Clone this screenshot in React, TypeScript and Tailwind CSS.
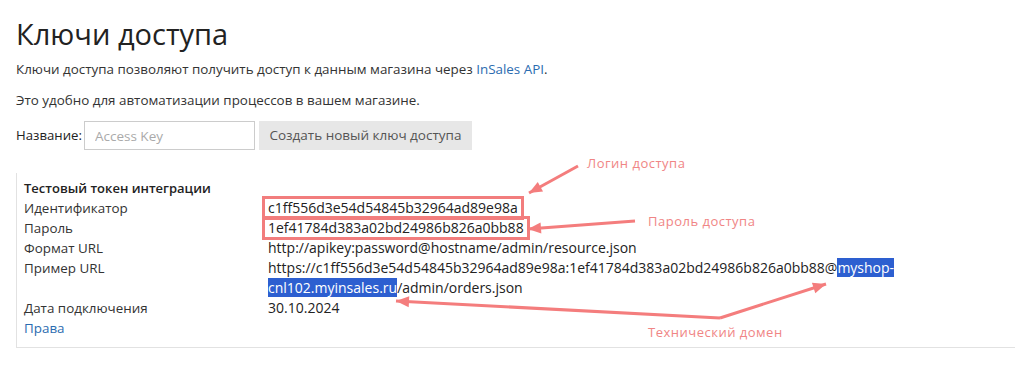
import React from 'react';

const font = { fontFamily: '"Open Sans", "Liberation Sans", sans-serif' };

const ARROW = '#f47d7d';

// arrowhead triangle at (x2,y2) pointing from (x1,y1)
function head(x1: number, y1: number, x2: number, y2: number, len = 13, half = 5.5) {
  const dx = x2 - x1;
  const dy = y2 - y1;
  const l = Math.hypot(dx, dy);
  const ux = dx / l;
  const uy = dy / l;
  const bx = x2 - ux * len;
  const by = y2 - uy * len;
  const px = -uy * half;
  const py = ux * half;
  return `${x2},${y2} ${bx + px},${by + py} ${bx - px},${by - py}`;
}

const arrows = [
  { x1: 578, y1: 166, x2: 529, y2: 193 },
  { x1: 635, y1: 221, x2: 528, y2: 229 },
  { x1: 720, y1: 318, x2: 826, y2: 284 },
  { x1: 720, y1: 318, x2: 396, y2: 301 },
];

const Marked: React.FC<{ children: React.ReactNode }> = ({ children }) => (
  <span className="inline-block -ml-[6px] -my-[2px] h-[24px] border-[3px] border-[#f27d7d] px-[3px] leading-[18px]">
    {children}
  </span>
);

export default function App() {
  return (
    <div className="relative h-[388px] w-full overflow-hidden bg-white text-[13.4px] text-[#333]" style={font}>
      <div className="px-4 pt-[14px]">
        <h1 className="text-[29px] leading-[40px] text-[#222]">Ключи доступа</h1>

        <p className="mt-[5px] leading-[20px]">
          Ключи доступа позволяют получить доступ к данным магазина через{' '}
          <a className="text-[#2b6cb0]">InSales API</a>.
        </p>
        <p className="mt-[11px] leading-[20px]">Это удобно для автоматизации процессов в вашем магазине.</p>

        <div className="mt-[11px] flex items-center gap-[4px]">
          <span className="mr-[-2px] text-[13.2px] text-[#222]">Название:</span>
          <input
            className="h-[29px] w-[171px] border border-[#ccc] px-[10px] text-[13.5px] text-[#333] outline-none placeholder:text-[#aaa]"
            placeholder="Access Key"
            style={font}
          />
          <button className="h-[29px] w-[213px] bg-[#e7e7e7] text-[13.5px] text-[#555]" style={font}>
            Создать новый ключ доступа
          </button>
        </div>

        <div className="mt-[23px] border-b border-l border-[#e2e2e2] pb-[9px] pl-[7px] pt-[5px]">
          <div className="grid grid-cols-[244px_1fr] leading-[20px]">
            <div className="col-span-2 text-[13px] font-semibold text-[#222]">Тестовый токен интеграции</div>
            <div>Идентификатор</div>
            <div className="text-[14px] text-[#222]">
              <Marked>c1ff556d3e54d54845b32964ad89e98a</Marked>
            </div>
            <div>Пароль</div>
            <div className="text-[14px] text-[#222]">
              <Marked>1ef41784d383a02bd24986b826a0bb88</Marked>
            </div>
            <div>Формат URL</div>
            <div className="text-[14px] text-[#222]">http://apikey:password@hostname/admin/resource.json</div>
            <div>Пример URL</div>
            <div className="pr-[100px] text-[14px] text-[#222]">
              https://c1ff556d3e54d54845b32964ad89e98a:1ef41784d383a02bd24986b826a0bb88@
              <span className="bg-[#2d5fd0] text-white">myshop-cnl102.myinsales.ru</span>/admin/orders.json
            </div>
            <div>Дата подключения</div>
            <div className="text-[14px] text-[#222]">30.10.2024</div>
            <div className="col-span-2 text-[#2b6cb0]">Права</div>
          </div>
        </div>
      </div>

      {/* annotations */}
      <svg className="pointer-events-none absolute inset-0" width="1031" height="388">
        {arrows.map((a, i) => (
          <g key={i}>
            <line x1={a.x1} y1={a.y1} x2={a.x2} y2={a.y2} stroke={ARROW} strokeWidth="3" />
            <polygon points={head(a.x1, a.y1, a.x2, a.y2)} fill={ARROW} />
          </g>
        ))}
      </svg>
      <div className="absolute left-[587px] top-[154px] text-[13px] tracking-[0.5px] text-[#f08585]">Логин доступа</div>
      <div className="absolute left-[648px] top-[212px] text-[13px] tracking-[0.5px] text-[#f08585]">Пароль доступа</div>
      <div className="absolute left-[648px] top-[323px] text-[13px] tracking-[0.5px] text-[#f08585]">Технический домен</div>
    </div>
  );
}
